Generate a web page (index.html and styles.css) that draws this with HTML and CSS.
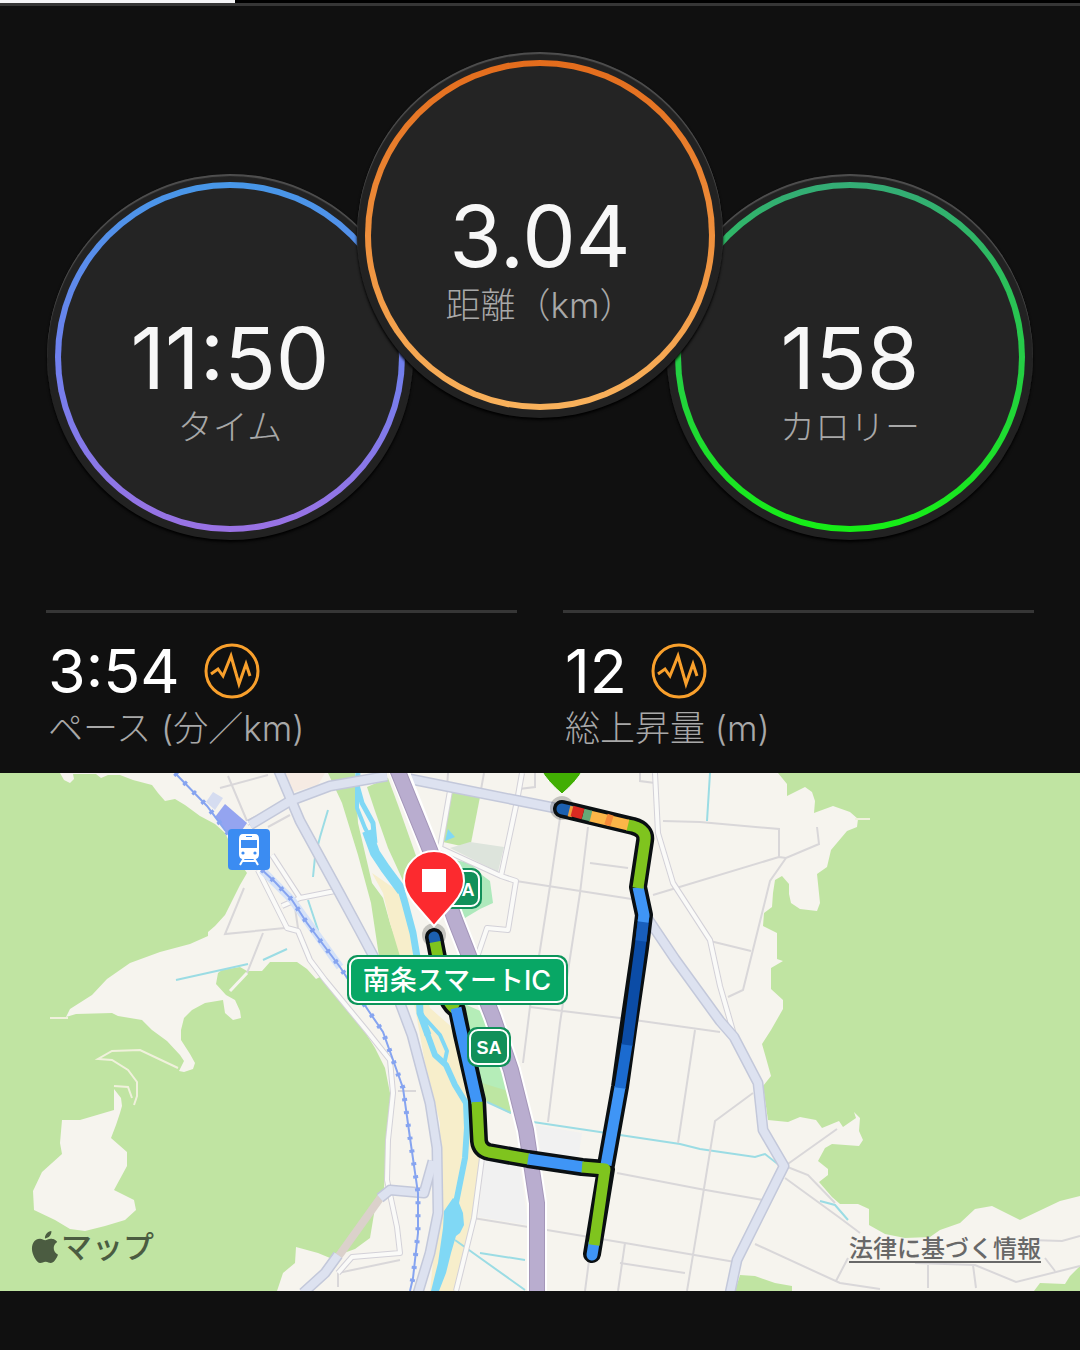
FILE: index.html
```html
<!DOCTYPE html>
<html lang="ja">
	<head>
		<meta charset="UTF-8">
		<meta name="viewport" content="width=device-width, initial-scale=1">
		<title>アクティビティ</title>
		<link rel="stylesheet" href="styles.css">
	</head>
	<body>
		<div class="progress"><div class="progress-bar" style="width:21.8%"></div></div>

		<section class="dials">
			<div class="dial side">
				<div class="ring time">
					<p class="dial-value">11:50</p>
					<p class="label">タイム</p>
				</div>
			</div>
			<div class="dial center">
				<div class="ring distance">
					<p class="dial-value">3.04</p>
					<p class="label">距離（km）</p>
				</div>
			</div>
			<div class="dial side">
				<div class="ring calorie">
					<p class="dial-value">158</p>
					<p class="label">カロリー</p>
				</div>
			</div>
		</section>

		<section class="stats">
			<div class="stat">
				<div class="stat-top">
					<span class="stat-value">3:54</span>
					<svg class="pulse" viewBox="0 0 56 56">
						<circle cx="28" cy="28" r="26"/>
						<path d="M7 31L14 26L19 33L27 13L35 41L42 21L46 33"/>
					</svg>
				</div>
				<p class="label">ペース (分／km)</p>
			</div>
			<div class="stat">
				<div class="stat-top">
					<span class="stat-value">12</span>
					<svg class="pulse" viewBox="0 0 56 56">
						<circle cx="28" cy="28" r="26"/>
						<path d="M7 31L14 26L19 33L27 13L35 41L42 21L46 33"/>
					</svg>
				</div>
				<p class="label">総上昇量 (m)</p>
			</div>
		</section>

		<section class="map">
			<svg class="map-canvas" viewBox="0 0 1080 518">
				<rect class="land" width="1080" height="518"/>

				<!-- 山・緑地 -->
				<g class="green">
					<path d="M0 0H60L64 7L70 10L74 6L73 1H96L101 5L108 2L120 2L133 7L152 12L158 20L165 28L175 26L185 32L200 43L215 51L225 60L240 90L247 100L240 112L232 128L225 142L215 153L208 159V163L190 171L160 179L130 190L107 206L92 222L70 236L66 244L76 241L112 240L118 243L142 247L152 257L167 268L180 282L184 288L179 298L184 299L193 296L195 290L190 281L181 267V257L184 245L192 237L205 230L223 227L225 240L233 247L241 245L240 238L235 227L226 222L216 211L218 200L222 197L240 194L247 198H262L270 189H297L307 196L316 206L320 204L345 229L360 251L375 275L385 295L390 320L391 335L388 360L385 400L384 415L375 435L370 465L355 476L330 485L318 480L296 474L295 490L283 500L277 518H0Z"/>
					<path d="M778 0L787 11V23L805 14L812 19L815 28L814 40L833 33L850 39L858 46L857 54L847 58L831 77L827 94L817 101L820 130L817 138L800 136L791 130L789 121V111L782 103L775 107L773 120L772 134L764 140L763 153L777 160V186L783 188L771 195V216L783 227V236L771 257L762 271L766 285L771 303L763 313L768 347L788 349L800 344L816 347L822 355L839 348L843 354L856 345L854 339L860 345L859 358L863 367L859 373L832 371L825 375L818 388L828 396V402L819 409L832 424L840 431H858L869 436V452L885 461L905 465L930 464L940 457L960 450L975 436L992 433L1020 447L1060 428L1080 423V0Z"/>
					<path d="M740 502L755 503L775 510L792 513V518H735ZM1034 518L1040 510L1065 511L1070 503L1080 493V518Z"/>
					<path d="M328 0H355L358 50L372 110L383 125L390 150L404 190H380L371 130L358 82L342 30Z"/>
					<path d="M367 14L388 5L398 32L415 80L422 100L405 112L388 75L375 38Z"/>
					<path d="M450 19L480 24L470 75L443 69Z"/>
				</g>
				<path class="land" d="M62 347H80L114 337V316L121 325L122 333L120 340L116 352L111 365L127 379V393L114 417L134 427L136 437L125 447L105 453L85 458L70 456L55 447L34 437L33 418L42 399L62 381L60 370Z"/>
				<path class="trail" d="M178 295L140 277L112 278L98 286L112 287L128 297L137 309V323L134 332M114 313L128 314L132 325M50 245H68M855 46H870"/>
				<path d="M470 69L504 74L498 99L450 75Z" fill="#dde4dc"/>
				<path d="M484 387L520 392L528 452L478 444Z" fill="#f1f1f1"/>
				<path d="M536 352L582 360L578 386L541 380Z" fill="#f1f1f1"/>
				<path d="M280 0H325L318 12L290 20Z" fill="#f6ebe3"/>
				<path d="M455 87L470 90L482 102L490 108L493 130L480 136L465 145L460 150Z" fill="#aee9bc"/>
				<path d="M462 230L485 240L505 300L511 340L485 328L475 290Z" fill="#b5edb8"/>
				<path d="M482 310L508 318L511 341L486 328Z" fill="#bde6a2"/>
				<path d="M448 56L455 64L445 68Z" fill="#80d8f5"/>

				<!-- 川 -->
				<path d="M372 100L383 120L390 150L402 190L415 235L425 290L440 350V420L430 518H456L473 445L480 387L470 330L455 257L430 235L417 190L408 125Z" fill="#f7eecb"/>
				<g class="river">
					<path d="M358 0L357 12L362 30L373 50L375 70" stroke-width="5"/>
					<path d="M357 15L357 35L365 55L372 68" stroke-width="4"/>
					<path d="M367 58L375 80L385 95L402 118" stroke-width="10"/>
					<path d="M400 113L405 130L413 160L418 190L420 240L428 262" stroke-width="7"/>
					<path d="M420 240L440 262L447 278L444 292" stroke-width="4"/>
					<path d="M427 260L435 282L446 292L455 312L466 330L467 355L465 385L456 430" stroke-width="6"/>
					<path class="pool" d="M453 425L459 430L463 440L464 452L460 460L456 463L451 480L446 500L439 518H431L438 490L443 455L444 438Z"/>
				</g>
				<path class="stream" d="M487 329L511 340M533 349L620 362L680 371L700 376L755 384L765 381L779 392M820 428L835 432L848 447M455 467L525 517M176 207L248 191M263 187L287 176M328 37L320 64L315 84L313 104M308 127L318 157L317 162M480 480L525 487M710 0L707 48"/>

				<!-- 細い道 -->
				<path class="lane" d="M220 15L268 2M228 3L247 48M268 54L290 42M244 115L225 161L285 155M263 160L247 200M295 135L298 155M448 0L447 15M484 0L480 22M516 108L638 127M560 45L550 113L540 177L530 234L523 290M588 54L580 120L560 250L548 349M590 90L628 95M530 234L620 245L720 259M663 48L700 49L779 56V84L653 122M779 84L786 85L819 71L817 54M786 85L770 108L743 217L728 224M710 168L751 178M695 257L678 370M617 400L700 416L763 427M473 445L547 457L625 470L735 489M625 470L618 518M590 480L585 518M753 320L715 348L700 440L687 518M785 393L837 356M785 393L808 402L835 430M785 405L840 445L860 460M755 471L840 510L880 516M848 485L836 508M915 490L975 492L1016 509L1080 493M928 492V515M973 492L976 515M1030 467L1062 468L1080 463M1045 485L1055 498M620 490L685 500M338 514V500L400 487M398 318H416M519 16L535 14V0M640 0V8L655 10"/>
				<path class="lane pale" d="M247 200L230 218"/>

				<!-- 白い道 -->
				<g class="road-edge">
					<path id="w1" d="M655 0L658 60L673 110L710 167L720 213L735 265"/>
					<path id="w2" d="M258 97L287 155L298 158L310 187L325 207L367 258L390 287L393 320L388 367L387 407L397 454L400 480L352 484L338 500"/>
					<path id="w3" d="M272 82L300 125L282 133M300 125L335 118M247 50L290 30"/>
					<path id="w4" d="M522 0L517 28L501 103M451 12L440 75L501 103L516 108L508 157L487 155L475 190M482 385L474 445L456 518"/>
				</g>
				<g class="road-fill">
					<use href="#w1"/><use href="#w2"/><use href="#w3"/><use href="#w4"/>
				</g>

				<!-- 幹線道路 -->
				<path d="M381 424L338 484" stroke="#dbd1cb" stroke-width="8" fill="none"/>
				<g class="main-edge">
					<path id="m1" d="M278 -4L300 48L340 121L360 158L385 205L400 230L412 262L430 330L437 375L438 440L430 480L418 520"/>
					<path id="m2" d="M250 52L290 28L330 13L387 3M410 6L450 14L520 28L560 36"/>
					<path id="m3" d="M636 108L644 140L675 186L720 248L734 264L758 310L763 357L784 393L737 487L730 520"/>
					<path id="m4" d="M433 388L424 420L390 417L380 425M338 482L325 500L303 520"/>
				</g>
				<g class="main-fill">
					<use href="#m1"/><use href="#m2"/><use href="#m3"/><use href="#m4"/>
				</g>
				<path d="M398 -4L430 77L455 147L493 244L511 297L526 357L537 430V520" fill="none" stroke="#fff" stroke-width="20"/>
				<path d="M397 -4L430 77L455 147L493 244L511 297L526 357L537 430V520" fill="none" stroke="#a597b9" stroke-width="16"/>
				<path d="M397 -4L430 77L455 147L493 244L511 297L526 357L537 430V520" fill="none" stroke="#b9adcf" stroke-width="14"/>

				<!-- 鉄道 -->
				<path d="M213 19L223 25L215 37L206 29Z" fill="#d5dcf0"/>
				<path d="M225 31L247 50L240 60H228L215 44Z" fill="#94a4f0"/>
				<g class="rail">
					<path class="rail-bed" d="M262 97L292 127L340 194"/>
					<path id="rail" d="M175 0L207 33L225 57L260 95L275 109L292 127L307 150L340 194L368 237L383 259L403 315L410 365L418 420V460L413 505L410 518"/>
					<use href="#rail" class="ties"/>
				</g>

				<!-- 駅 -->
				<rect x="228" y="56" width="42" height="41" rx="4" fill="#3b8cf2"/>
				<path d="M243 61H255Q259 61 259 66V81Q259 86 255 86H243Q239 86 239 81V66Q239 61 243 61ZM241 67V75H257V67ZM246 63V64H252V63Z" fill="#fff" fill-rule="evenodd"/>
				<circle cx="243" cy="80" r="1.6" fill="#3b8cf2"/>
				<circle cx="255" cy="80" r="1.6" fill="#3b8cf2"/>
				<path d="M244 85L240 92M254 85L258 92M242 88H256" stroke="#fff" stroke-width="2"/>

				<!-- SA 標識（ピンの下） -->
				<rect x="441" y="95" width="41" height="41" rx="10" fill="#11905a"/>
				<rect x="444" y="98" width="35" height="35" rx="8" fill="#11905a" stroke="#fff" stroke-width="2"/>
				<text class="sa" x="462" y="123">SA</text>

				<!-- ルート -->
				<g class="route-glow">
					<circle cx="562" cy="35" r="12"/>
					<circle cx="434" cy="162" r="12"/>
				</g>
				<path class="route-edge" d="M562 36L633 53Q647 57 645 68L638 114L644 142L640 175L628 257L620 314L606 392M434 164L441 200Q444 230 457 237L462 262L477 327L479 368Q480 377 489 379L528 386L582 394L606 396L592 481"/>
				<g class="route">
					<path d="M562 36L571 38" stroke="#1c60b0" stroke-linecap="round"/>
					<path d="M606 392L620 314" stroke="#3f95f6"/>
					<path d="M620 315L627 271" stroke="#1b6bd0"/>
					<path d="M627 272L640 175L643 150" stroke="#0b4ca6"/>
					<path d="M641 168L644 142" stroke="#195fbd"/>
					<path d="M643 149L644 142L638 114" stroke="#3f95f6"/>
					<path d="M638 115L645 68Q647 57 633 53L627 52" stroke="#7fc41e"/>
					<path d="M590 43L628 52" stroke="#fcb648"/>
					<path d="M606 46L612 48" stroke="#f58a3a"/>
					<path d="M583 41L591 43" stroke="#66a977"/>
					<path d="M569 38L573 39" stroke="#f0a03c"/>
					<path d="M572 38L583 41" stroke="#da2a22"/>
					<path d="M434 164L435 168" stroke="#1c60b0" stroke-linecap="round"/>
					<path d="M435 169L441 200Q444 230 457 237" stroke="#7fc41e"/>
					<path d="M456 235L462 262L477 330" stroke="#3f95f6"/>
					<path d="M477 329L479 368Q480 377 489 379L529 386" stroke="#7fc41e"/>
					<path d="M528 386L583 394" stroke="#3f95f6"/>
					<path d="M592 482L594 470" stroke="#3f95f6" stroke-linecap="round"/>
					<path d="M582 394L605 396L594 472" stroke="#7fc41e"/>
				</g>

				<!-- ピン -->
				<path d="M541 -3H583Q577 8 562 21Q547 8 541 -3Z" fill="#41ae03" stroke="#fff" stroke-width="1"/>
				<path d="M434 153L414 130Q404 118 404 108A30 30 0 0 1 464 108Q464 118 454 130Z" fill="#fc2a2f" stroke="#fff" stroke-width="2"/>
				<rect x="422" y="96" width="24" height="23" fill="#fff"/>

				<!-- 標識 -->
				<rect x="347" y="182" width="221" height="50" rx="10" fill="#0c955a"/>
				<rect x="350" y="185" width="215" height="44" rx="8" fill="#08a765" stroke="#fff" stroke-width="2"/>
				<text class="ic" x="457" y="217">南条スマートIC</text>
				<rect x="467" y="254" width="44" height="40" rx="10" fill="#11905a"/>
				<rect x="470" y="257" width="38" height="34" rx="8" fill="#11905a" stroke="#fff" stroke-width="2"/>
				<text class="sa" x="489" y="281">SA</text>
			</svg>

			<div class="brand">
				<svg class="apple" viewBox="0 0 24 24">
					<path d="M12.152 6.896c-.948 0-2.415-1.078-3.96-1.04-2.04.027-3.91 1.183-4.961 3.014-2.117 3.675-.546 9.103 1.519 12.09 1.013 1.454 2.208 3.09 3.792 3.039 1.52-.065 2.09-.987 3.935-.987 1.831 0 2.35.987 3.96.948 1.637-.026 2.676-1.48 3.676-2.948 1.156-1.688 1.636-3.325 1.662-3.415-.039-.013-3.182-1.221-3.22-4.857-.026-3.04 2.48-4.494 2.597-4.559-1.429-2.09-3.623-2.324-4.39-2.376-2-.156-3.675 1.09-4.61 1.09zM15.53 3.83c.843-1.012 1.4-2.427 1.245-3.83-1.207.052-2.662.805-3.532 1.818-.78.896-1.454 2.338-1.273 3.714 1.338.104 2.715-.688 3.559-1.701"/>
				</svg>
				<span>マップ</span>
			</div>
			<a class="legal" href="#">法律に基づく情報</a>
		</section>
	</body>
</html>
```

FILE: styles.css
```css
*{
	box-sizing: border-box;
}
body{
	margin: 0;
	background: #101010;
	color: #fff;
	font-family: Inter, "Noto Sans CJK JP", sans-serif;
}
p{
	margin: 0;
}
.progress{
	height: 6px;
	background: #000;
	border-bottom: 3px solid #363636;
}
.progress-bar{
	height: 3px;
	background: #f5f5f7;
}

/* 丸いメーター */
.dials{
	display: flex;
	justify-content: center;
	padding: 46px 0 70px;
}
.dial{
	width: 366px;
	height: 366px;
	flex: none;
	padding: 8px;
	border-radius: 50%;
	background: #222;
	box-shadow: inset 0 2px 1px #505050, 0 2px 3px #000;
}
.side{
	margin-top: 122px;
}
.center{
	position: relative;
	margin: 0 -56px;
}
.ring{
	height: 350px;
	border: 6px solid transparent;
	border-radius: 50%;
	padding-top: 127px;
	text-align: center;
}
.time{
	background: linear-gradient(#242424, #242424) padding-box, linear-gradient(#4797e8, #6f80ee 50%, #9a72e4) border-box;
}
.distance{
	background: linear-gradient(#242424, #242424) padding-box, linear-gradient(#e36c1c, #f9b25c) border-box;
}
.calorie{
	background: linear-gradient(#242424, #242424) padding-box, linear-gradient(#34ac76, #16ee16) border-box;
}
.dial-value{
	font-size: 85px;
	line-height: 88px;
	color: #f7f7f7;
}
.label{
	font-weight: 300;
	font-size: 35px;
	line-height: 48px;
	color: #a8a8a8;
}

.stats{
	display: grid;
	grid-template-columns: 1fr 1fr;
	gap: 46px;
	padding: 0 46px 21px;
}
.stat{
	border-top: 3px solid #363636;
	padding: 27px 0 0 2px;
}
.stat-top{
	display: flex;
	align-items: center;
	gap: 24px;
	height: 62px;
	margin-bottom: 2px;
}
.stat-value{
	font-size: 61px;
	line-height: 62px;
}
.pulse{
	width: 56px;
	height: 56px;
	fill: none;
	stroke: #f9a02c;
	stroke-width: 3;
}

/* 地図 */
.map{
	position: relative;
	margin-bottom: 59px;
}
.map-canvas{
	display: block;
	width: 100%;
	height: auto;
}
.land{
	fill: #f6f4ee;
}
.green{
	fill: #c0e4a2;
}
.trail{
	fill: none;
	stroke: #f0f1dc;
	stroke-width: 2;
}
.river{
	fill: none;
	stroke: #80d8f5;
	stroke-linejoin: round;
}
.river .pool{
	fill: #80d8f5;
	stroke: none;
}
.stream{
	fill: none;
	stroke: #9bdce4;
	stroke-width: 2;
}
.lane{
	fill: none;
	stroke: #d9d7d9;
	stroke-width: 2;
}
.lane.pale{
	stroke: #f6f4ee;
	stroke-width: 3;
}
.road-edge{
	fill: none;
	stroke: #d3d1d8;
	stroke-width: 6;
}
.road-fill{
	fill: none;
	stroke: #fafaf8;
	stroke-width: 4;
}
.road-edge,
.road-fill,
.main-edge,
.main-fill{
	stroke-linejoin: round;
}
.main-edge{
	fill: none;
	stroke: #c3c8da;
	stroke-width: 11;
}
.main-fill{
	fill: none;
	stroke: #dde2f0;
	stroke-width: 8;
}
.rail{
	fill: none;
	stroke: #86a4f0;
	stroke-width: 2;
}
.rail .rail-bed{
	stroke: #d5e2f8;
	stroke-width: 8;
}
.ties{
	stroke-width: 5;
	stroke-dasharray: 3 10;
}
.route-glow{
	fill: #000;
	opacity: 0.2;
}
.route-edge{
	fill: none;
	stroke: #0a0f12;
	stroke-width: 18;
	stroke-linecap: round;
	stroke-linejoin: round;
}
.route{
	fill: none;
	stroke-width: 11;
	stroke-linejoin: round;
}
.sa{
	font-family: "Liberation Sans", sans-serif;
	font-weight: bold;
	font-size: 18px;
	fill: #fff;
	text-anchor: middle;
}
.ic{
	font-weight: 500;
	font-size: 27px;
	fill: #fff;
	text-anchor: middle;
}
.brand{
	position: absolute;
	left: 29px;
	bottom: 26px;
	display: flex;
	align-items: center;
	font-weight: 500;
	font-size: 31px;
	line-height: 36px;
	color: #4b5c41;
}
.apple{
	width: 32px;
	height: 34px;
	fill: #4b5c41;
}
.legal{
	position: absolute;
	right: 39px;
	bottom: 26px;
	font-family: "Noto Sans CJK JP", sans-serif;
	font-weight: 500;
	font-size: 24px;
	line-height: 36px;
	color: #686868;
	text-underline-offset: 4px;
}
```
